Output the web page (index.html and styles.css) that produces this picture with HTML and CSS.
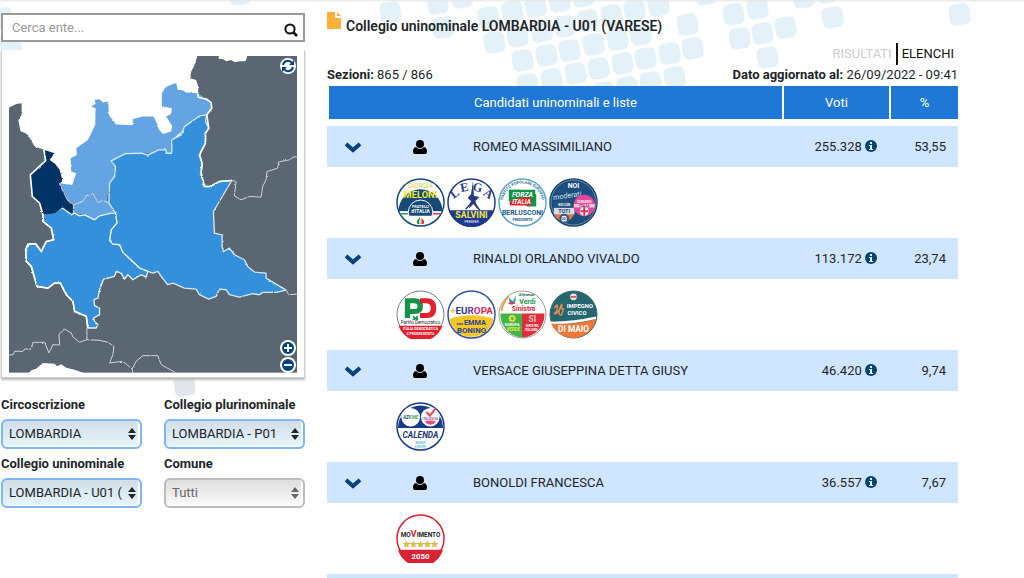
FILE: index.html
```html
<!DOCTYPE html>
<html lang="it">
<head>
  <meta charset="UTF-8">
  <meta name="viewport" content="width=device-width, initial-scale=1">
  <title>Collegio uninominale LOMBARDIA - U01 (VARESE)</title>
  <link rel="stylesheet" href="styles.css">
</head>
<body>
  <svg class="backdrop" width="1024" height="400" aria-hidden="true">
    <defs>
      <rect id="tile" x="-10" y="-10" width="21" height="21" rx="6" transform="rotate(-10)"/>
    </defs>
    <g fill="#e4f1f8">
      <use href="#tile" x="2" y="18"/><use href="#tile" x="10" y="45"/><use href="#tile" x="239" y="-6"/>
      <use href="#tile" x="390" y="12"/><use href="#tile" x="437" y="3"/><use href="#tile" x="461" y="-3"/>
      <use href="#tile" x="442" y="27"/><use href="#tile" x="488" y="17"/><use href="#tile" x="512" y="11"/>
      <use href="#tile" x="535" y="6"/><use href="#tile" x="559" y="1"/><use href="#tile" x="582" y="-4"/>
      <use href="#tile" x="494" y="42"/><use href="#tile" x="517" y="36"/><use href="#tile" x="541" y="31"/>
      <use href="#tile" x="564" y="26"/><use href="#tile" x="587" y="20"/><use href="#tile" x="611" y="15"/>
      <use href="#tile" x="634" y="10"/><use href="#tile" x="658" y="5"/><use href="#tile" x="705" y="-6"/>
      <use href="#tile" x="522" y="60"/><use href="#tile" x="546" y="55"/><use href="#tile" x="569" y="50"/>
      <use href="#tile" x="593" y="44"/><use href="#tile" x="617" y="39"/><use href="#tile" x="640" y="34"/>
      <use href="#tile" x="687" y="24"/><use href="#tile" x="527" y="84"/><use href="#tile" x="551" y="79"/>
      <use href="#tile" x="575" y="73"/><use href="#tile" x="598" y="68"/><use href="#tile" x="622" y="63"/>
      <use href="#tile" x="645" y="58"/><use href="#tile" x="669" y="53"/><use href="#tile" x="692" y="48"/>
      <use href="#tile" x="603" y="92"/><use href="#tile" x="627" y="87"/><use href="#tile" x="650" y="82"/>
      <use href="#tile" x="674" y="77"/><use href="#tile" x="733" y="14"/><use href="#tile" x="757" y="8"/>
      <use href="#tile" x="803" y="-3"/><use href="#tile" x="827" y="-8"/>
      <use href="#tile" x="739" y="38"/><use href="#tile" x="762" y="33"/><use href="#tile" x="785" y="27"/>
      <use href="#tile" x="832" y="17"/><use href="#tile" x="767" y="57"/><use href="#tile" x="959" y="14"/>
    </g>
    <use href="#tile" x="184" y="385" fill="#e2e6ea"/>
  </svg>

  <svg class="sprite" aria-hidden="true">
    <symbol id="i-down" viewBox="0 0 18 12"><path d="M2 3l7 6 7-6" fill="none" stroke="#00437e" stroke-width="4"/></symbol>
    <symbol id="i-user" viewBox="0 0 14 14"><circle cx="7" cy="4" r="4"/><path d="M3 7C1 7.500 0 9 0 12q0 2 2 2h10q2 0 2-2c0-3-1-4.500-3-5-2 2.500-6 2.500-8 0z"/></symbol>
    <symbol id="i-info" viewBox="0 0 12 12"><circle cx="6" cy="6" r="6" fill="#00437e"/><path d="M5 2h2v2H5zM4 5h3v4h1v1H4V9h1V6H4z" fill="#fff"/></symbol>
  </svg>

  <main class="page">
    <aside class="sidebar">
      <form class="search">
        <input type="text" aria-label="Cerca ente" placeholder="Cerca ente...">
        <button type="submit" aria-label="Cerca">
          <svg width="14" height="14" viewBox="0 0 14 14"><circle cx="6" cy="6" r="4.600" fill="none" stroke="#111" stroke-width="2"/><path d="M9 9l4 4" stroke="#111" stroke-width="2.600"/></svg>
        </button>
      </form>

      <div class="map">
        <svg class="map-image" viewBox="28 168 865 951" role="img" aria-label="Mappa della Lombardia">
          <defs>
            <filter id="coast" x="-5%" y="-5%" width="110%" height="110%">
              <feTurbulence type="fractalNoise" baseFrequency="0.12" numOctaves="2" seed="4"/>
              <feDisplacementMap in="SourceGraphic" scale="6" xChannelSelector="R" yChannelSelector="G"/>
            </filter>
          </defs>
          <rect x="28" y="168" width="865" height="951" fill="#5a6672"/>
          <path fill="#fff" d="M658 160V176L672 178 680 184 696 180 706 187 720 184 738 184 743 172V160z"/>
          <path fill="#fff" d="M83 1125L95 1112 108 1108 130 1090 165 1092 172 1100 185 1094 200 1104 225 1110 250 1119V1125z"/>
          <g filter="url(#coast)" stroke-linejoin="round">
            <path fill="#fff" d="M0 140H594V168L583 200 575 215 572 235 590 240 597 262 595 290 540 410 480 420 400 400 300 500 220 560 165 560 135 450 105 440 85 405 62 392 56 360 66 345 66 310 50 312 30 322 0 324z"/>
            <path fill="#65a4e2" d="M595 280L560 278 548 270 535 270 530 248 500 260 487 280 487 318 517 325 515 342 500 350 518 378 515 395 490 402 478 388 472 370 462 350 430 350 400 357 400 376 350 374 328 345 326 305 310 308 300 298 285 300 288 312 275 320 288 325 287 375 265 420 230 445 232 465 213 475 215 515 230 520 218 555 200 553 180 550 203 600 222 612V640L255 645 285 660 300 648 335 640 345 635 322 600 330 550 345 530 348 500 335 483 378 461 517 460V420L600 348 622 345 637 325 635 305z"/>
            <path fill="#3490db" stroke="#d5e8f7" stroke-width="4" d="M600 348L622 345 618 365 628 385 618 400 618 430 600 465 608 490 605 520 615 560 632 560 660 545 697 542 642 635 645 700 668 705 668 740 672 756 690 745 705 765 735 780 745 800 765 817 800 820 800 835 860 871 830 878 790 878 780 885 760 882 720 892 690 885 680 870 660 868 650 890 628 898 600 885 590 868 555 865 520 850 505 855 485 830 475 815 460 820 420 805 370 758 360 735 340 733 330 722 335 690 352 670 348 640 328 610 330 550 345 530 348 500 335 483 378 461 425 460 445 466 478 450 500 450 500 460 517 460V420L545 405 555 380z"/>
            <path fill="#3490db" stroke="#e8f2fa" stroke-width="4" d="M130 645L160 635 190 625 215 645 225 640 240 648 255 645 285 660 300 648 335 640 348 640 352 670 335 690 330 722 340 733 360 735 370 758 420 805 445 815 440 832 425 825 400 840 385 825 375 838 365 820 350 815 345 830 312 838 300 870 295 895 283 900 285 918 300 925 300 945 282 955 285 965 295 975 290 985 265 985 260 950 225 935 220 905 200 885 182 850 165 850 145 865 112 860 95 800 80 785 78 750 85 733 108 732 125 755 140 725 162 720 155 685 130 665z"/>
            <path fill="#003366" d="M135 450L165 460 150 480 165 490 180 510 188 540 180 553 200 590 203 605 220 615 218 640 200 630 190 622 165 640 132 645 120 610 98 590 92 525 138 485z"/>
            <g fill="none" stroke="#fff" stroke-width="5">
              <path d="M595 280L597 292 622 298 635 308 637 325 622 345 628 385 618 400 618 430 600 465 608 490 605 520 615 560 632 560 660 545 697 542"/>
              <path d="M133 450L138 482 92 525 98 590 120 610 130 645 130 665 155 685 162 720 140 725 125 755 108 732 85 733 78 750 80 785 95 800 112 860 145 865 165 850 182 850 200 885 220 905 225 935 260 950 265 985"/>
            </g>
            <g fill="none" stroke="#cfd5da" stroke-width="3">
              <path d="M222 615L250 605 262 585 270 590 280 580 295 608 310 602 330 610M180 553L203 600 222 615V640"/>
              <path d="M697 542L710 545 705 588 725 600 750 590 785 592 790 560 800 540 803 515 835 505 838 486 870 480 885 470 910 475M860 871L868 885 910 882"/>
              <path d="M10 1067L40 1065 45 1055 70 1055 75 1048 95 1048 100 1028 135 1028 148 1060 160 1035 180 1036 178 1005 195 988 215 1000 220 1012 240 1028 262 1020V985M262 1020L300 1022 325 1028 343 1040 340 1065 330 1090 370 1085 398 1108 410 1085 430 1068 475 1068 485 1095 528 1119M398 1108L402 1130"/>
            </g>
          </g>
        </svg>
        <button class="map-button map-reset" aria-label="Ripristina mappa">
          <svg viewBox="0 0 16 16"><path d="M3 7a5 5 0 0 1 9-2M13 9a5 5 0 0 1-9 2" fill="none" stroke="#00437e" stroke-width="2"/><path d="M14 2v5H9zM2 14V9h5z" fill="#00437e"/></svg>
        </button>
        <div class="map-zoom">
          <button class="map-button" aria-label="Ingrandisci">
            <svg viewBox="0 0 16 16"><circle cx="8" cy="8" r="6" fill="#00437e"/><path d="M4 8h8M8 4v8" stroke="#fff" stroke-width="2"/></svg>
          </button>
          <button class="map-button" aria-label="Riduci">
            <svg viewBox="0 0 16 16"><circle cx="8" cy="8" r="6" fill="#00437e"/><path d="M4 8h8" stroke="#fff" stroke-width="2"/></svg>
          </button>
        </div>
      </div>

      <form class="filters">
        <div class="field">
          <label for="circoscrizione">Circoscrizione</label>
          <select id="circoscrizione"><option>LOMBARDIA</option></select>
        </div>
        <div class="field">
          <label for="plurinominale">Collegio plurinominale</label>
          <select id="plurinominale"><option>LOMBARDIA - P01</option></select>
        </div>
        <div class="field">
          <label for="uninominale">Collegio uninominale</label>
          <select id="uninominale"><option>LOMBARDIA - U01 (VARESE)</option></select>
        </div>
        <div class="field">
          <label for="comune">Comune</label>
          <select id="comune" class="empty"><option>Tutti</option></select>
        </div>
      </form>
    </aside>

    <section class="results">
      <h1>
        <svg width="14" height="17" viewBox="0 0 14 17"><path d="M0 0h8v6h6v11H0zM10 0l4 4h-4z" fill="#fbb03b"/></svg>
        Collegio uninominale LOMBARDIA - U01 (VARESE)
      </h1>
      <nav class="tabs">
        <a href="#risultati" class="current">RISULTATI</a>
        <a href="#elenchi">ELENCHI</a>
      </nav>
      <div class="summary">
        <span><b>Sezioni:</b> 865 / 866</span>
        <span><b>Dato aggiornato al:</b> 26/09/2022 - 09:41</span>
      </div>

      <table>
        <colgroup>
          <col class="col-toggle"><col class="col-person"><col><col class="col-votes"><col class="col-percent">
        </colgroup>
        <thead>
          <tr><th colspan="3">Candidati uninominali e liste</th><th>Voti</th><th>%</th></tr>
        </thead>
        <tbody>
          <tr class="spacer"><td colspan="5"></td></tr>
          <tr class="candidate">
            <td><button aria-label="Mostra liste"><svg width="18" height="12"><use href="#i-down"/></svg></button></td>
            <td><svg width="14" height="14"><use href="#i-user"/></svg></td>
            <td class="name">ROMEO MASSIMILIANO</td>
            <td class="number">255.328 <svg width="12" height="12"><use href="#i-info"/></svg></td>
            <td class="number">53,55</td>
          </tr>
          <tr class="lists"><td colspan="5"><div class="logos">
            <svg viewBox="0 0 100 100" role="img" aria-label="Fratelli d'Italia">
              <circle cx="50" cy="50" r="48" fill="#fff" stroke="#174a78" stroke-width="3"/>
              <path d="M5 68A45 45 0 1 1 95 68z" fill="#174a78"/>
              <path d="M8 70h84" stroke="#fff" stroke-width="3"/><path d="M8 73h26" stroke="#29965a" stroke-width="3"/><path d="M66 73h26" stroke="#d23b3b" stroke-width="3"/>
              <circle cx="50" cy="70" r="25" fill="#174a78" stroke="#fff" stroke-width="2"/>
              <path d="M26 77h48c-5 25-43 25-48 0z" fill="#fff"/>
              <path d="M44 94c-5-8 4-10 5-15v15z" fill="#159447"/><path d="M48 94c-2-8 1-10 2-14 1 5 3 9 2 14z" fill="#ddd"/><path d="M52 94V80c2 5 8 8 4 14z" fill="#dc2f32"/>
              <text x="50" y="21" font-size="13" fill="#d0d23e">GIORGIA</text>
              <text x="50" y="40" font-size="19" font-weight="700" fill="#f5ea35">MELONI</text>
              <text x="50" y="61" font-size="8" font-weight="700" fill="#fff">FRATELLI</text>
              <text x="50" y="72" font-size="10" font-weight="700" fill="#fff">d'ITALIA</text>
            </svg>
            <svg viewBox="0 0 100 100" role="img" aria-label="Lega Salvini Premier">
              <circle cx="50" cy="50" r="48" fill="#fff" stroke="#233a8c" stroke-width="3"/>
              <path d="M4 66h92a48 48 0 0 1-92 0z" fill="#1d3a91"/>
              <g font-size="25" font-weight="700" fill="#263a86" font-family="Liberation Serif, serif">
                <text x="20" y="38" transform="rotate(-35 20 38)">L</text><text x="37" y="27" transform="rotate(-10 37 27)">E</text><text x="61" y="27" transform="rotate(10 61 27)">G</text><text x="80" y="39" transform="rotate(35 80 39)">A</text>
              </g>
              <path d="M53 6l-4 27-7 8 7 6-5 16 10-10 9 12-5-18 8-8-11-3z" fill="#263a86"/>
              <path d="M49 34l7 10-18 20M54 48l13 18" fill="none" stroke="#263a86" stroke-width="3"/>
              <text x="50" y="81" font-size="18" font-weight="700" fill="#f7e83d">SALVINI</text>
              <text x="50" y="92" font-size="7" fill="#fff">PREMIER</text>
            </svg>
            <svg viewBox="0 0 100 100" role="img" aria-label="Forza Italia">
              <circle cx="50" cy="50" r="48" fill="#fff" stroke="#5ca6cb" stroke-width="3"/>
              <path id="ppe" d="M11 60A40 40 0 1 1 89 60" fill="none"/>
              <text font-size="8" font-weight="700" fill="#1f6a93"><textPath href="#ppe" startOffset="50%">PARTITO POPOLARE EUROPEO</textPath></text>
              <path d="M22 24v24l22-4V24z" fill="#119447"/><path d="M24 24h52v18H24z" fill="#119447"/><path d="M24 48l20-8h32v16H24z" fill="#e3242b"/>
              <path d="M78 32L58 42v16h20z" fill="#119447"/><path d="M56 40h12v16H56z" fill="#e3242b"/>
              <g font-weight="700" font-style="italic" fill="#fff"><text x="50" y="39" font-size="14">FORZA</text><text x="48" y="54" font-size="13">ITALIA</text></g>
              <text x="50" y="76" font-size="14" font-weight="700" fill="#155b8b">BERLUSCONI</text>
              <text x="50" y="88" font-size="7" font-weight="700" fill="#155b8b">PRESIDENTE</text>
            </svg>
            <svg viewBox="0 0 100 100" role="img" aria-label="Noi moderati">
              <circle cx="50" cy="50" r="48" fill="#1b4e7c" stroke="#174066" stroke-width="3"/>
              <circle cx="50" cy="50" r="46" fill="none" stroke="#b9cfe0"/>
              <text x="50" y="21" font-size="14" font-weight="700" fill="#fff">NOI</text>
              <text x="38" y="41" font-size="15" font-style="italic" fill="#d6e2ed" transform="rotate(-8 38 41)">moderati</text>
              <circle cx="31" cy="68" r="21" fill="#e9723d"/><path d="M11 61a21 21 0 0 1 40 0z" fill="#24547e"/><path d="M10 61h42v13H10z" fill="#d4dce6"/>
              <circle cx="72" cy="56" r="22" fill="#e6469a"/><path d="M51 53h42v7H51z" fill="#f8cae0"/>
              <circle cx="72" cy="68" r="9" fill="#fff"/><path d="M72 59v18M64 68h16" stroke="#d2344b" stroke-width="4"/><circle cx="31" cy="83" r="8" fill="#fff" stroke="#315a94" stroke-width="4"/>
              <g font-weight="700"><text x="31" y="58" font-size="6" fill="#fff">NOI CON</text><text x="31" y="72" font-size="11" fill="#244d82">TOTI</text><text x="31" y="85" font-size="6" fill="#244d82">UDC</text><text x="72" y="50" font-size="6" fill="#fff">CORAGGIO</text><text x="72" y="59" font-size="7" fill="#8d2462">ITALIA</text></g>
            </svg>
          </div></td></tr>

          <tr class="candidate">
            <td><button aria-label="Mostra liste"><svg width="18" height="12"><use href="#i-down"/></svg></button></td>
            <td><svg width="14" height="14"><use href="#i-user"/></svg></td>
            <td class="name">RINALDI ORLANDO VIVALDO</td>
            <td class="number">113.172 <svg width="12" height="12"><use href="#i-info"/></svg></td>
            <td class="number">23,74</td>
          </tr>
          <tr class="lists"><td colspan="5"><div class="logos">
            <svg viewBox="0 0 100 100" role="img" aria-label="Partito Democratico">
              <circle cx="50" cy="50" r="48" fill="#fff" stroke="#777" stroke-width="2"/>
              <path d="M5 73h90a48 48 0 0 1-90 0z" fill="#e3202c"/>
              <path d="M18 17h20q17 0 17 16T38 49H29v8H18zM29 27v12h8q7 0 7-6t-7-6z" fill="#18924b" fill-rule="evenodd"/>
              <path d="M49 17h14q19 0 19 20T63 57H49V47h12q10 0 10-10t-10-10H49z" fill="#e3202c"/>
              <path d="M40 56c-7-7-8 1-3 2-8 3-2 5 3 2 4 3 8 0 4-3 3-5-1-6-4-1z" fill="#18924b"/>
              <text x="50" y="69" font-size="9" fill="#222">Partito Democratico</text>
              <g font-size="7" font-weight="700" fill="#fff"><text x="50" y="82">ITALIA DEMOCRATICA</text><text x="50" y="91">E PROGRESSISTA</text></g>
            </svg>
            <svg viewBox="0 0 100 100" role="img" aria-label="+Europa con Emma Bonino">
              <circle cx="50" cy="50" r="48" fill="#fff" stroke="#31549a" stroke-width="3"/>
              <path d="M5 59q46-15 90 0a46 46 0 0 1-90 0z" fill="#f5c52a"/>
              <text x="50" y="48" font-size="20" font-weight="700"><tspan fill="#f5c52a">+</tspan><tspan fill="#263c90">EU</tspan><tspan fill="#6b3a91">R</tspan><tspan fill="#c12d7e">O</tspan><tspan fill="#dc2c52">PA</tspan></text>
              <g font-size="15" font-weight="700" fill="#29458f"><text x="57" y="71">EMMA</text><text x="50" y="87" font-size="16">BONINO</text><text x="26" y="71" font-size="8">con</text></g>
            </svg>
            <svg viewBox="0 0 100 100" role="img" aria-label="Alleanza Verdi e Sinistra">
              <circle cx="50" cy="50" r="48" fill="#fff" stroke="#999" stroke-width="2"/>
              <path d="M5 48h44v49A47 47 0 0 1 5 48z" fill="#42b549"/><path d="M49 48h46a47 47 0 0 1-46 49z" fill="#dd303c"/>
              <path d="M22 15l8 8 7-12-2 16-12-1z" fill="#34a3b9"/><path d="M20 27l9-3 7 3-9 3z" fill="#e2363e"/>
              <path d="M7 43Q10 25 22 13" fill="none" stroke="#eaa23c" stroke-width="4"/>
              <circle cx="29" cy="58" r="7" fill="#f4d742"/><circle cx="29" cy="58" r="3" fill="#42b549"/>
              <g font-weight="700"><text x="58" y="13" font-size="8" fill="#176b42">Alleanza</text><text x="60" y="28" font-size="14" fill="#15984e">Verdi</text><text x="52" y="43" font-size="14" fill="#df2836">Sinistra</text><text x="29" y="74" font-size="8" fill="#fff">EUROPA</text><text x="31" y="84" font-size="9" fill="#f4e44b">VERDE</text><text x="70" y="66" font-size="17" fill="#ffc0c0">SI</text><g font-size="6" fill="#fff"><text x="70" y="76">SINISTRA</text><text x="68" y="84">ITALIANA</text></g></g>
            </svg>
            <svg viewBox="0 0 100 100" role="img" aria-label="Impegno Civico Di Maio">
              <circle cx="50" cy="50" r="48" fill="#26666f" stroke="#386d77" stroke-width="2"/>
              <path d="M3 64q40 10 93-5a48 48 0 0 1-93 5z" fill="#ef7836"/><path d="M4 65q47-1 92-11v5Q50 70 4 69z" fill="#fff"/>
              <circle cx="50" cy="14" r="7" fill="#f1dddd"/><path d="M44 14h12" stroke="#d93846" stroke-width="3"/>
              <path d="M11 37q7-12 6-1t-7 12q7 2 10-7M26 28q-9 20-4 23t7-13q-10 2-1-7" fill="none" stroke="#e88955" stroke-width="3"/>
              <g font-size="12" font-weight="700" fill="#fff"><text x="63" y="37">IMPEGNO</text><text x="57" y="51">CIVICO</text><text x="50" y="85" font-size="17">DI MAIO</text></g>
            </svg>
          </div></td></tr>

          <tr class="candidate">
            <td><button aria-label="Mostra liste"><svg width="18" height="12"><use href="#i-down"/></svg></button></td>
            <td><svg width="14" height="14"><use href="#i-user"/></svg></td>
            <td class="name">VERSACE GIUSEPPINA DETTA GIUSY</td>
            <td class="number">46.420 <svg width="12" height="12"><use href="#i-info"/></svg></td>
            <td class="number">9,74</td>
          </tr>
          <tr class="lists"><td colspan="5"><div class="logos">
            <svg viewBox="0 0 100 100" role="img" aria-label="Azione Italia Viva Calenda">
              <circle cx="50" cy="50" r="48" fill="#fff" stroke="#183b8d" stroke-width="3"/>
              <path d="M4 53a46 46 0 0 1 92 0z" fill="#183b8d"/>
              <circle cx="30" cy="31" r="19" fill="#fff"/><circle cx="70" cy="31" r="19" fill="#fff"/>
              <text x="30" y="35" font-size="9" font-weight="700" font-style="italic" fill="#144c8c">AZI<tspan fill="#43a847">ONE</tspan></text>
              <path d="M62 20l7 8 12-15" fill="none" stroke="#e34458" stroke-width="4"/><path d="M58 40q12-4 24 0-11 13-24 0z" fill="#eb4a86"/>
              <text x="70" y="37" font-size="6" font-weight="700" fill="#a4478c">ITALIAVIVA</text>
              <text x="50" y="74" font-size="17" font-weight="700" font-style="italic" fill="#173980">CALENDA</text>
              <g font-size="6" fill="#25a1d0"><text x="50" y="85">RENEW</text><text x="50" y="93">EUROPE</text></g>
            </svg>
          </div></td></tr>

          <tr class="candidate">
            <td><button aria-label="Mostra liste"><svg width="18" height="12"><use href="#i-down"/></svg></button></td>
            <td><svg width="14" height="14"><use href="#i-user"/></svg></td>
            <td class="name">BONOLDI FRANCESCA</td>
            <td class="number">36.557 <svg width="12" height="12"><use href="#i-info"/></svg></td>
            <td class="number">7,67</td>
          </tr>
          <tr class="lists"><td colspan="5"><div class="logos">
            <svg viewBox="0 0 100 100" role="img" aria-label="Movimento 5 Stelle 2050">
              <circle cx="50" cy="50" r="48" fill="#fff" stroke="#d82432" stroke-width="3"/>
              <path d="M4 73h92a48 48 0 0 1-92 0z" fill="#d82432"/>
              <text x="50" y="46" font-size="13" font-weight="700" fill="#222">MO<tspan fill="#d82432" font-size="19">V</tspan>IMENTO</text>
              <text x="50" y="67" font-size="17" fill="#f2cd21" stroke="#c9a41c">★★★★★</text>
              <text x="50" y="91" font-size="16" font-weight="700" fill="#fff">2050</text>
            </svg>
          </div></td></tr>
          <tr class="candidate">
            <td></td><td></td><td></td><td></td><td></td>
          </tr>
        </tbody>
      </table>
    </section>
  </main>
</body>
</html>
```
FILE: styles.css
```css
* {
  box-sizing: border-box;
}

body {
  margin: 0;
  font-family: Roboto, sans-serif;
  font-size: 13px;
  line-height: 20px;
  color: #212529;
  background: #fff;
  overflow-x: hidden;
}

button {
  padding: 0;
  border: none;
  background: none;
  cursor: pointer;
}

.backdrop {
  position: absolute;
  top: 0;
  left: 0;
  z-index: -1;
}

.sprite {
  display: none;
}

.page {
  display: grid;
  grid-template-columns: 304fr 631fr;
  gap: 22px;
  padding: 0 66px 0 1px;
  height: 100vh;
  overflow: hidden;
  box-shadow: inset 0 2px 2px -1px #e4e4e4;
}

.sidebar {
  padding-top: 13px;
}

/* search */
.search {
  display: flex;
  height: 29px;
  border: 2px solid #999;
  background: #fff;
}

.search input {
  flex: 1;
  min-width: 0;
  padding: 0 9px;
  border: none;
  outline: none;
  font: inherit;
  background: none;
}

.search input::placeholder {
  color: #999;
}

.search button {
  display: flex;
  align-items: center;
  padding: 4px 5px 0;
}

/* map */
.map {
  position: relative;
  margin-top: 8px;
  padding: 6px 7px 4px;
  background: #fff;
  border: 1px solid #ccc;
  border-top: none;
  box-shadow: 0 2px 2px #bbb;
}

.map-image {
  display: block;
  width: 100%;
}

.map-button {
  display: block;
  width: 16px;
  height: 16px;
  border-radius: 50%;
  background: #fff;
}

.map-button svg {
  display: block;
}

.map-reset {
  position: absolute;
  top: 8px;
  right: 8px;
}

.map-zoom {
  position: absolute;
  right: 8px;
  bottom: 4px;
}

.map-zoom .map-button + .map-button {
  margin-top: 1px;
}

/* filters */
.filters {
  display: grid;
  grid-template-columns: 1fr 1fr;
  column-gap: 22px;
  row-gap: 5px;
  margin-top: 17px;
}

label {
  display: block;
  margin-bottom: 4px;
  font-weight: 700;
  white-space: nowrap;
}

select {
  display: block;
  width: 100%;
  height: 30px;
  padding: 0 18px 0 6px;
  appearance: none;
  border: 2px solid #7db5fb;
  border-radius: 6px;
  font: inherit;
  color: #212529;
  background:
    url("data:image/svg+xml,%3Csvg xmlns='http://www.w3.org/2000/svg' width='8' height='12'%3E%3Cpath d='M4 0l4 5H0zM4 12l4-5H0z' fill='%23212529'/%3E%3C/svg%3E") no-repeat right 4px center,
    linear-gradient(#d2dee4, #e6f5ff);
  box-shadow: inset -2px -1px 1px #fff;
}

select.empty {
  border-color: #bbb;
  color: #666;
  background:
    url("data:image/svg+xml,%3Csvg xmlns='http://www.w3.org/2000/svg' width='8' height='12'%3E%3Cpath d='M4 0l4 5H0zM4 12l4-5H0z' fill='%23666'/%3E%3C/svg%3E") no-repeat right 4px center,
    linear-gradient(#dedede, #fafafa);
}

/* results */
.results {
  padding-top: 12px;
}

h1 {
  display: flex;
  gap: 5px;
  margin: 0;
  font-size: 14px;
  font-weight: 600;
  line-height: 28px;
}

.tabs {
  display: flex;
  justify-content: flex-end;
  margin-top: 3px;
  padding-right: 4px;
  line-height: 22px;
}

.tabs a {
  padding-left: 4px;
  color: #111;
  text-decoration: none;
}

.tabs .current {
  padding-right: 4px;
  color: #ccc;
  border-right: 2px solid #111;
}

.summary {
  display: flex;
  justify-content: space-between;
}

table {
  width: 100%;
  margin-top: 1px;
  table-layout: fixed;
  border-collapse: separate;
  border-spacing: 0;
}

.col-toggle {
  width: 52px;
}

.col-person {
  width: 82px;
}

.col-votes {
  width: 107px;
}

.col-percent {
  width: 69px;
}

th {
  height: 33px;
  padding: 0;
  font-weight: 400;
  color: #fff;
  background: #1f78d6;
  border-left: 2px solid #fff;
}

td {
  padding: 0;
  text-align: center;
}

.spacer td {
  height: 7px;
}

.candidate td {
  height: 41px;
  background: #d0e5ff;
}

.candidate .name {
  padding-left: 12px;
  text-align: left;
}

.candidate .number {
  padding-right: 12px;
  text-align: right;
}

.candidate svg {
  vertical-align: middle;
}

.candidate .number svg {
  vertical-align: -1px;
}

.lists td {
  height: 71px;
  padding-left: 69px;
}

.logos {
  display: flex;
  gap: 2px;
}

.logos svg {
  width: 49px;
  height: 49px;
}

.logos text {
  text-anchor: middle;
}
```
